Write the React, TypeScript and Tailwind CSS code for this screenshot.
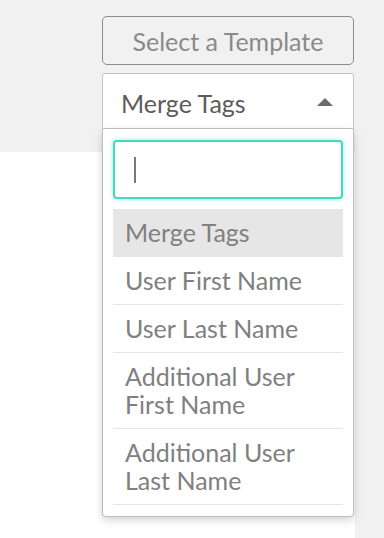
import React, { type FC } from 'react';

const tags = [
  'User First Name',
  'User Last Name',
  'Additional User First Name',
  'Additional User Last Name',
];

const App: FC = () => {
  return (
    <div className="w-[384px] h-[538px] flex flex-col bg-[#f1f1f1] font-['Lato',sans-serif] text-[25px] leading-[28px] text-[#808080]">
      {/* toolbar */}
      <header className="h-[152px] shrink-0 pl-[102px] pt-[16px]">
        <div className="relative w-[252px]">
          <button className="w-full h-[49px] rounded-[5px] border border-[#8c8c8c] bg-[#f1f1f1] text-[#8a8a8a]">
            Select a Template
          </button>

          <div className="mt-[8px] h-[56px] flex items-center justify-between pl-[18px] pr-[20px] rounded-t-[3px] border border-[#c4c4c4] bg-white text-[#5c5c5c]">
            <span className="pt-[3px]">Merge Tags</span>
            <svg width="16" height="8" viewBox="0 0 16 8" className="mt-[2px]">
              <polygon points="8,0 16,8 0,8" fill="#6b6b6b" />
            </svg>
          </div>

          {/* open menu */}
          <div className="absolute left-0 top-full z-10 w-full px-[10px] pt-[11px] pb-[11px] rounded-b-[4px] border border-t-0 border-[#bdbdbd] bg-white shadow-[0_3px_8px_rgba(0,0,0,0.18)]">
            <div className="h-[59px] flex items-center pl-[19px] rounded-[4px] border-2 border-[#3fdcc4] bg-white shadow-[0_0_5px_rgba(63,220,196,0.5)]">
              <span className="w-[2px] h-[26px] bg-[#777]" />
            </div>
            <ul className="mt-[10px]">
              <li className="pl-[12px] pr-[10px] pt-[9px] pb-[10px] border-b border-[#e6e6e6] bg-[#e6e6e6]">Merge Tags</li>
              {tags.map((t) => (
                <li key={t} className="pl-[12px] pr-[40px] pt-[9px] pb-[10px] border-b border-[#e6e6e6]">
                  {t}
                </li>
              ))}
            </ul>
          </div>
        </div>
      </header>

      <div className="flex-1 flex">
        <div className="w-[355px] bg-white" />
      </div>
    </div>
  );
};

export default App;
